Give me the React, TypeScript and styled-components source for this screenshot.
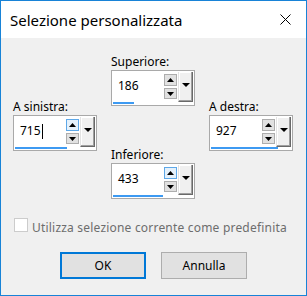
import * as React from "react";
import styled, { createGlobalStyle } from "styled-components";

const GlobalStyle = createGlobalStyle`
  body {
    margin: 0;
    font-family: "Noto Sans", "Liberation Sans", sans-serif;
    font-size: 12px;
    color: #000;
  }
`;

type Margin = { value: string; bar: number; hot?: boolean; caret?: boolean };

const Window = styled.div`
  width: 307px;
  height: 296px;
  box-sizing: border-box;
  border: 1px solid #1883d7;
  background: #f0f0f0;
  display: flex;
  flex-direction: column;
`;

const TitleBar = styled.div`
  height: 37px;
  flex-shrink: 0;
  background: #fff;
  display: flex;
  align-items: center;
  justify-content: space-between;
  padding: 0 15px 0 9px;
`;

const Title = styled.span`
  font-size: 15px;
  line-height: 20px;
  margin-top: 1px;
`;

const Content = styled.div`
  display: flex;
  flex-direction: column;
  padding: 16px 13px 0 12px;
`;

const Controls = styled.div`
  display: grid;
  grid-template-columns: 84px 84px 84px;
  column-gap: 14px;
`;

const Column = styled.div<{ $offset: number }>`
  display: flex;
  flex-direction: column;
  padding-top: ${(p) => p.$offset}px;
`;

const Group = styled.div<{ $gap?: number }>`
  display: flex;
  flex-direction: column;
  margin-top: ${(p) => p.$gap || 0}px;
`;

const Label = styled.label`
  line-height: 16px;
  height: 16px;
`;

const Box = styled.div`
  height: 36px;
  box-sizing: border-box;
  border: 1px solid #a9a9a9;
  background: #fff;
  padding: 1px;
  display: flex;
  flex-direction: column;
`;

const BoxRow = styled.div`
  display: flex;
  height: 29px;
`;

const Value = styled.div`
  flex: 1;
  display: flex;
  align-items: center;
  padding-left: 5px;
  padding-bottom: 1px;
  line-height: 16px;
`;

const Caret = styled.span`
  display: inline-block;
  width: 1px;
  height: 15px;
  background: #000;
  margin-left: 1px;
`;

const SpinColumn = styled.div`
  width: 13px;
  display: flex;
  flex-direction: column;
  gap: 2px;
  padding-top: 2px;
  margin-right: 1px;
`;

const SpinButton = styled.div<{ $hot?: boolean; $height: number }>`
  height: ${(p) => p.$height}px;
  box-sizing: border-box;
  border: 1px solid ${(p) => (p.$hot ? "#5ea8e8" : "#adadad")};
  background: ${(p) => (p.$hot ? "#e5f1fb" : "#e1e1e1")};
  display: flex;
  align-items: center;
  justify-content: center;
`;

const DropButton = styled.div`
  width: 15px;
  height: 30px;
  box-sizing: border-box;
  border-right: 1px solid #696969;
  border-bottom: 1px solid #696969;
  border-left: 1px solid #e3e3e3;
  box-shadow: inset -1px -1px 0 #a0a0a0, inset 1px 1px 0 #fff;
  background: #f0f0f0;
  display: flex;
  justify-content: center;
  padding-top: 11px;
`;

const Bar = styled.div`
  height: 3px;
  background: #3d9af2;
  margin-top: 1px;
`;

const CheckRow = styled.div`
  display: flex;
  align-items: flex-start;
  margin-top: 18px;
  height: 17px;
  padding-left: 1px;
`;

const CheckBox = styled.span`
  width: 14px;
  height: 14px;
  box-sizing: border-box;
  border: 1px solid #cccccc;
  background: #fff;
  margin-top: 1px;
`;

const CheckLabel = styled.span`
  color: #6d6d6d;
  line-height: 16px;
  margin-left: 4px;
  margin-top: 3px;
  letter-spacing: 0.2px;
`;

const Buttons = styled.div`
  display: flex;
  justify-content: center;
  gap: 15px;
  margin-top: 18px;
  padding-left: 1px;
`;

const Button = styled.button<{ $default?: boolean }>`
  width: 86px;
  height: 27px;
  box-sizing: border-box;
  border: ${(p) => (p.$default ? "2px solid #0078d7" : "1px solid #adadad")};
  background: #e1e1e1;
  font: inherit;
  color: #000;
  padding: 0;
`;

function Triangle({ dir, size }: { dir: "up" | "down"; size: number }) {
  const h = Math.ceil(size / 2);
  const points =
    dir === "up" ? `0,${h} ${size},${h} ${size / 2},0` : `0,0 ${size},0 ${size / 2},${h}`;
  return (
    <svg width={size} height={h} viewBox={`0 0 ${size} ${h}`}>
      <polygon points={points} fill="#000" />
    </svg>
  );
}

function CloseIcon() {
  return (
    <svg width="11" height="11" viewBox="0 0 11 11">
      <path d="M0.5 0.5 L10.5 10.5 M10.5 0.5 L0.5 10.5" stroke="#000" strokeWidth="1" />
    </svg>
  );
}

function MarginField({ label, margin }: { label: string; margin: Margin }) {
  return (
    <>
      <Label>{label}</Label>
      <Box>
        <BoxRow>
          <Value>
            {margin.value}
            {margin.caret && <Caret />}
          </Value>
          <SpinColumn>
            <SpinButton $hot={margin.hot} $height={12}>
              <Triangle dir="up" size={7} />
            </SpinButton>
            <SpinButton $height={11}>
              <Triangle dir="down" size={7} />
            </SpinButton>
          </SpinColumn>
          <DropButton>
            <Triangle dir="down" size={8} />
          </DropButton>
        </BoxRow>
        <Bar style={{ width: margin.bar }} />
      </Box>
    </>
  );
}

export default function App() {
  return (
    <>
      <GlobalStyle />
      <Window>
        <TitleBar>
          <Title>Selezione personalizzata</Title>
          <CloseIcon />
        </TitleBar>
        <Content>
          <Controls>
            <Column $offset={45}>
              <MarginField
                label="A sinistra:"
                margin={{ value: "715", bar: 52, hot: true, caret: true }}
              />
            </Column>
            <Column $offset={0}>
              <Group>
                <MarginField label="Superiore:" margin={{ value: "186", bar: 21 }} />
              </Group>
              <Group $gap={41}>
                <MarginField
                  label="Inferiore:"
                  margin={{ value: "433", bar: 50, hot: true }}
                />
              </Group>
            </Column>
            <Column $offset={45}>
              <MarginField label="A destra:" margin={{ value: "927", bar: 67 }} />
            </Column>
          </Controls>
          <CheckRow>
            <CheckBox />
            <CheckLabel>Utilizza selezione corrente come predefinita</CheckLabel>
          </CheckRow>
          <Buttons>
            <Button $default>OK</Button>
            <Button>Annulla</Button>
          </Buttons>
        </Content>
      </Window>
    </>
  );
}
